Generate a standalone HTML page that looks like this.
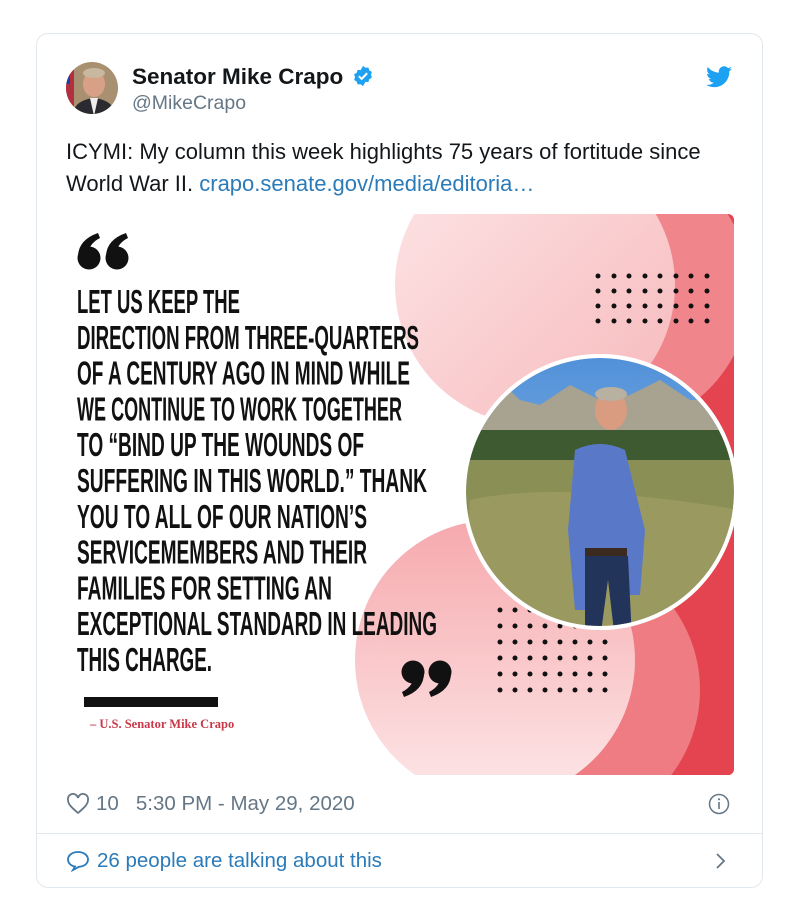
<!DOCTYPE html>
<html><head><meta charset="utf-8"><style>
body{margin:0;background:#fff;width:799px;height:922px;position:relative;font-family:"Liberation Sans",sans-serif;overflow:hidden}
.card{position:absolute;left:36px;top:33px;width:727px;height:855px;border:1px solid #e1e8ed;border-radius:12px;box-sizing:border-box}
.abs{position:absolute}
</style></head><body>
<div class="card"></div>
<svg class="abs" style="left:64px;top:60px" width="56" height="56" viewBox="0 0 56 56">
<defs><clipPath id="av"><circle cx="28" cy="28" r="26"/></clipPath></defs>
<g clip-path="url(#av)"><rect width="56" height="56" fill="#a89070"/><rect x="0" y="10" width="10" height="40" fill="#b03040"/><rect x="0" y="10" width="6" height="14" fill="#2040a0"/>
<ellipse cx="30" cy="24" rx="11" ry="13" fill="#d9a088"/><path d="M8 56 Q10 40 30 38 Q50 40 52 56Z" fill="#2a2a30"/><path d="M26 38 L30 56 L34 38Z" fill="#eee"/><ellipse cx="30" cy="13" rx="11" ry="5" fill="#c8b8a0"/></g></svg>
<div class="abs" style="left:132px;top:64px;font-size:22.5px;font-weight:bold;color:#14171a;white-space:nowrap">Senator Mike Crapo <svg style="vertical-align:-3px;margin-left:2px" width="22" height="22" viewBox="0 0 24 24"><path d="M12 1l2.6 2 3.3-.3.9 3.2 2.9 1.6-1 3.2 1 3.1-2.9 1.7-.9 3.1-3.3-.2L12 23l-2.6-2-3.3.2-.9-3.1-2.9-1.7 1-3.1-1-3.2 2.9-1.6.9-3.2 3.3.3z" fill="#1da1f2"/><path d="M7.5 12.2l3 3 6-6.2" stroke="#fff" stroke-width="2.2" fill="none"/></svg></div>
<div class="abs" style="left:132px;top:92px;font-size:19.5px;color:#657786">@MikeCrapo</div>
<svg class="abs" style="left:706px;top:66px" width="26" height="22" viewBox="0 0 24 20"><path d="M24 2.4c-.9.4-1.8.6-2.8.8 1-.6 1.8-1.6 2.2-2.7-1 .6-2 1-3.1 1.2A4.9 4.9 0 0 0 11.9 6C7.8 5.8 4.2 3.9 1.7.9c-1.3 2.3-.6 5.1 1.5 6.6-.8 0-1.6-.2-2.2-.6 0 2.4 1.7 4.4 3.9 4.8-.7.2-1.5.2-2.2.1.6 2 2.4 3.4 4.6 3.4A9.9 9.9 0 0 1 0 17.2 14 14 0 0 0 7.5 19.4c9.1 0 14.3-7.7 14-14.6 1-.7 1.8-1.5 2.5-2.4z" fill="#1da1f2"/></svg>
<div class="abs" style="left:66px;top:136px;font-size:22px;line-height:32px;color:#14171a;width:684px">ICYMI: My column this week highlights 75 years of fortitude since World War II. <span style="color:#2b7bb9">crapo.senate.gov/media/editoria…</span></div>
<svg class="abs" style="left:66px;top:214px" width="668" height="561" viewBox="66 214 668 561">
<defs>
<clipPath id="img"><rect x="66" y="214" width="668" height="561" rx="6"/></clipPath>
<clipPath id="ph"><circle cx="600" cy="492" r="134"/></clipPath>
<linearGradient id="g1" x1="0" y1="0" x2="1" y2="1"><stop offset="0" stop-color="#fde6e7"/><stop offset="1" stop-color="#f7b9bc"/></linearGradient>
<linearGradient id="g2" x1="0" y1="0" x2="0" y2="1"><stop offset="0" stop-color="#f6a9ad"/><stop offset="1" stop-color="#fde7e8"/></linearGradient>
<linearGradient id="sky" x1="0" y1="0" x2="0" y2="1"><stop offset="0" stop-color="#4f8fd8"/><stop offset="1" stop-color="#a8c8e8"/></linearGradient>
</defs>
<g clip-path="url(#img)">
<rect x="66" y="214" width="668" height="561" fill="#fff"/>
<rect x="640" y="214" width="94" height="561" fill="#e3444f"/>
<circle cx="610" cy="290" r="140" fill="#f0858b"/>
<circle cx="535" cy="285" r="140" fill="url(#g1)"/>
<rect x="470" y="620" width="264" height="155" fill="#e3444f"/>
<circle cx="560" cy="690" r="140" fill="#ef7c83"/>
<circle cx="495" cy="660" r="140" fill="url(#g2)"/>
<g fill="#111">
<g id="r1"><circle cx="598" cy="276" r="2.5"/><circle cx="614" cy="276" r="2.5"/><circle cx="629" cy="276" r="2.5"/><circle cx="645" cy="276" r="2.5"/><circle cx="660" cy="276" r="2.5"/><circle cx="676" cy="276" r="2.5"/><circle cx="691" cy="276" r="2.5"/><circle cx="707" cy="276" r="2.5"/></g>
<use href="#r1" y="15"/><use href="#r1" y="30"/><use href="#r1" y="45"/>
<g id="r2"><circle cx="500" cy="610" r="2.5"/><circle cx="515" cy="610" r="2.5"/><circle cx="530" cy="610" r="2.5"/><circle cx="545" cy="610" r="2.5"/><circle cx="560" cy="610" r="2.5"/><circle cx="575" cy="610" r="2.5"/><circle cx="590" cy="610" r="2.5"/><circle cx="605" cy="610" r="2.5"/></g>
<use href="#r2" y="16"/><use href="#r2" y="32"/><use href="#r2" y="48"/><use href="#r2" y="64"/><use href="#r2" y="80"/>
</g>
<circle cx="600" cy="492" r="138" fill="#fff"/>
<g clip-path="url(#ph)">
<rect x="460" y="350" width="290" height="290" fill="url(#sky)"/>
<path d="M460 400 L490 372 L520 400 L540 405 L570 385 L600 400 L630 395 L660 380 L690 400 L740 400 L740 460 L460 460Z" fill="#a8a290"/>
<rect x="460" y="430" width="290" height="40" fill="#3d5a30"/>
<rect x="460" y="460" width="290" height="180" fill="#8a9055"/>
<path d="M470 500 Q560 480 740 510 L740 640 L460 640Z" fill="#9a9a60"/>
<path d="M575 450 Q600 438 625 450 L645 530 L640 595 L625 595 L625 560 L590 560 L588 610 L575 610 L568 530Z" fill="#5a78c8"/>
<rect x="585" y="548" width="42" height="8" fill="#3a2a20"/>
<path d="M585 556 L628 556 L632 640 L615 640 L608 580 L600 640 L585 640Z" fill="#22345a"/>
<ellipse cx="611" cy="410" rx="16" ry="20" fill="#d99c80"/>
<ellipse cx="611" cy="394" rx="16" ry="7" fill="#b8b0a0"/>
</g>
<circle cx="600" cy="492" r="136" fill="none" stroke="#fff" stroke-width="4"/>
<g fill="#111">
<circle cx="89" cy="258" r="11.5"/><path d="M78 257 Q78 240 98 233 L100 238 Q88 244 88 256Z"/>
<circle cx="117" cy="258" r="11.5"/><path d="M106 257 Q106 240 126 233 L128 238 Q116 244 116 256Z"/>
<circle cx="413" cy="672" r="11.5"/><path d="M424 673 Q424 690 404 697 L402 692 Q414 686 414 674Z"/>
<circle cx="440" cy="672" r="11.5"/><path d="M451 673 Q451 690 431 697 L429 692 Q441 686 441 674Z"/>
</g>
<g font-family="Liberation Sans,sans-serif" font-weight="bold" font-size="33" fill="#111">
<text x="77" y="313" textLength="163" lengthAdjust="spacingAndGlyphs">LET US KEEP THE</text>
<text x="77" y="348.8" textLength="342" lengthAdjust="spacingAndGlyphs">DIRECTION FROM THREE-QUARTERS</text>
<text x="77" y="384.6" textLength="333" lengthAdjust="spacingAndGlyphs">OF A CENTURY AGO IN MIND WHILE</text>
<text x="77" y="420.4" textLength="325" lengthAdjust="spacingAndGlyphs">WE CONTINUE TO WORK TOGETHER</text>
<text x="77" y="456.2" textLength="287" lengthAdjust="spacingAndGlyphs">TO “BIND UP THE WOUNDS OF</text>
<text x="77" y="492" textLength="350" lengthAdjust="spacingAndGlyphs">SUFFERING IN THIS WORLD.” THANK</text>
<text x="77" y="527.8" textLength="290" lengthAdjust="spacingAndGlyphs">YOU TO ALL OF OUR NATION’S</text>
<text x="77" y="563.6" textLength="290" lengthAdjust="spacingAndGlyphs">SERVICEMEMBERS AND THEIR</text>
<text x="77" y="599.4" textLength="255" lengthAdjust="spacingAndGlyphs">FAMILIES FOR SETTING AN</text>
<text x="77" y="635.2" textLength="360" lengthAdjust="spacingAndGlyphs">EXCEPTIONAL STANDARD IN LEADING</text>
<text x="77" y="671" textLength="135" lengthAdjust="spacingAndGlyphs">THIS CHARGE.</text>
</g>
<rect x="84" y="697" width="134" height="10" fill="#111"/>
<text x="90" y="728" font-family="Liberation Serif,serif" font-weight="bold" font-size="12.5" fill="#c8394a">– U.S. Senator Mike Crapo</text>
</g>
</svg>
<svg class="abs" style="left:66px;top:793px" width="24" height="22" viewBox="0 0 24 22"><path d="M12 20 C5 14 2 11 2 7 A5 5 0 0 1 12 5 A5 5 0 0 1 22 7 C22 11 19 14 12 20Z" fill="none" stroke="#657786" stroke-width="1.8"/></svg>
<div class="abs" style="left:96px;top:792px;font-size:20.5px;color:#657786">10&nbsp;&nbsp;&nbsp;5:30 PM - May 29, 2020</div>
<svg class="abs" style="left:708px;top:793px" width="22" height="22" viewBox="0 0 22 22"><circle cx="11" cy="11" r="9.5" fill="none" stroke="#657786" stroke-width="1.5"/><rect x="10.2" y="9" width="1.6" height="7" fill="#657786"/><circle cx="11" cy="6.3" r="1.1" fill="#657786"/></svg>
<div class="abs" style="left:37px;top:833px;width:725px;height:1px;background:#e1e8ed"></div>
<svg class="abs" style="left:66px;top:850px" width="24" height="22" viewBox="0 0 24 22"><path d="M12 2 C6 2 2 5.5 2 9.5 C2 13 5 16 9 16.5 L7 20 L13 16.8 C18.5 16.4 22 13.3 22 9.5 C22 5.5 18 2 12 2Z" fill="none" stroke="#2b7bb9" stroke-width="1.8"/></svg>
<div class="abs" style="left:97px;top:849px;font-size:20.5px;color:#2b7bb9">26 people are talking about this</div>
<svg class="abs" style="left:713px;top:851px" width="14" height="20" viewBox="0 0 14 20"><path d="M4 3 L11 10 L4 17" fill="none" stroke="#657786" stroke-width="1.8"/></svg>
</body></html>
